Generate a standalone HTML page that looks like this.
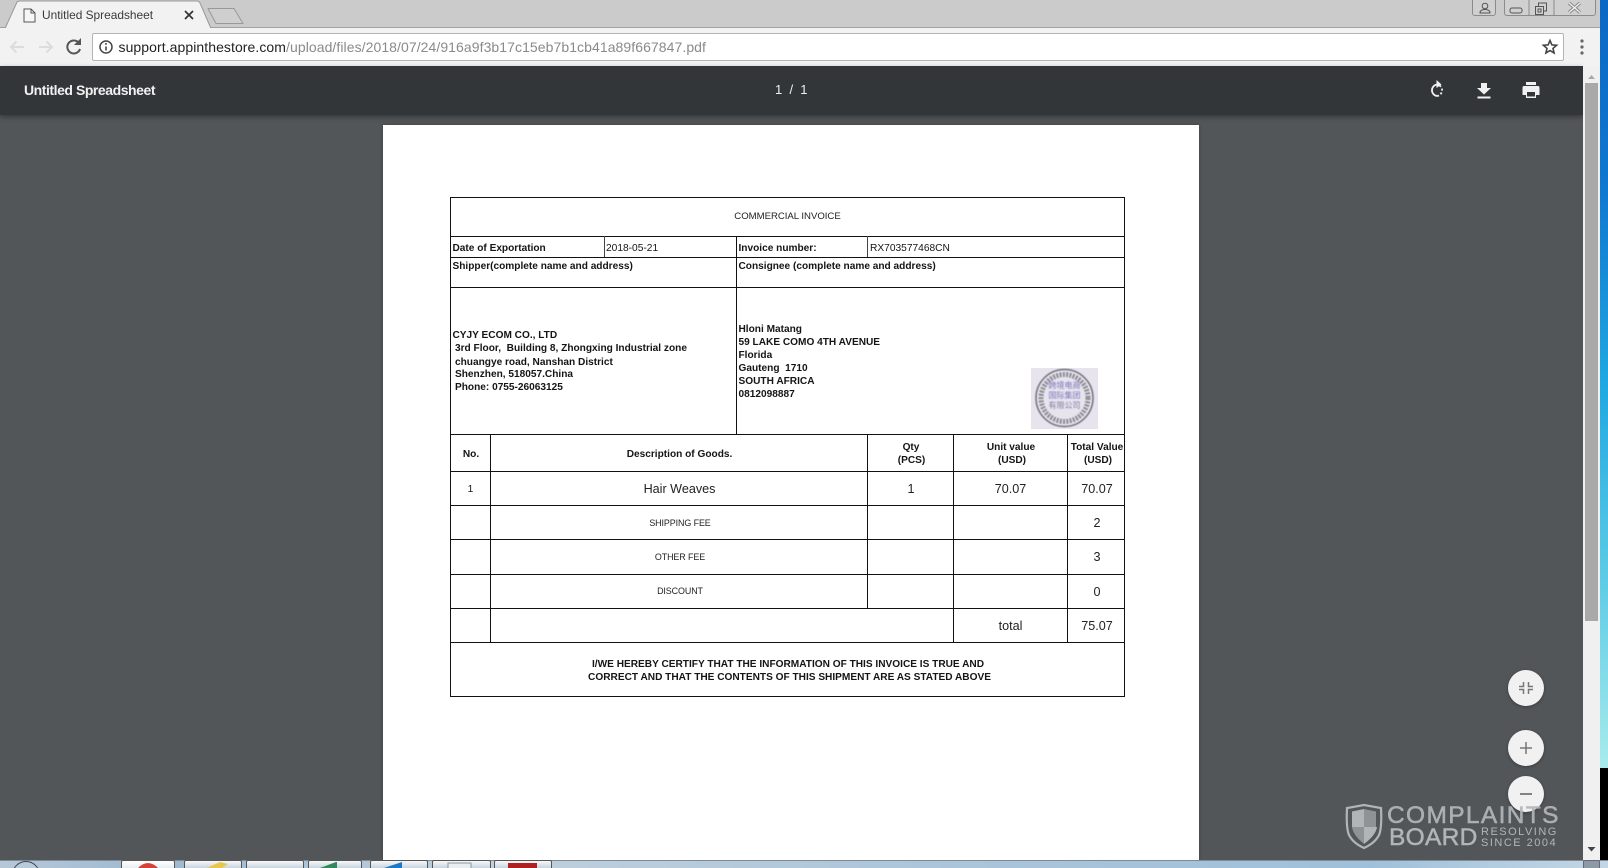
<!DOCTYPE html>
<html><head><meta charset="utf-8"><title>Untitled Spreadsheet</title>
<style>
html,body{margin:0;padding:0;width:1608px;height:868px;overflow:hidden;background:#000;font-family:"Liberation Sans",sans-serif}
div,svg{position:absolute}
span{position:static}
#root{left:0;top:0;width:1608px;height:868px;overflow:hidden;background:#000}
.t{white-space:nowrap;color:#151515;line-height:14px;height:14px}
.c{transform:translateX(-50%)}
.b{font-weight:bold;font-size:10.12px}
.r{font-size:10.2px}
.n{font-size:12.6px;color:#222}
.k{font-size:9.6px;letter-spacing:-.1px;transform:translateX(-50%) scaleX(.93);color:#222}
.h{background:#111;height:1.2px}
.v{background:#111;width:1.2px}
.tb{top:860px;height:8px;background:linear-gradient(#f8f8f8,#c8d4de);border:1px solid #555;border-bottom:0;box-sizing:border-box;border-radius:2px 2px 0 0}
</style></head><body>
<div id="root">

<div style="left:1600px;top:0;width:8px;height:768px;background:linear-gradient(#0b68c4 0,#0f78d0 25%,#1fa8e2 50%,#5ccbe6 75%,#a8ebec 100%)"></div>

<div style="left:0;top:0;width:1600px;height:28px;background:#cbcbcb;border-bottom:1px solid #a2a2a2;box-sizing:border-box"></div>
<svg style="left:0;top:0" width="260" height="30">
<path d="M5 28.5 L17 2 Q18 1 20 1 L197 1 Q199 1 200 3 L211 28.5" fill="#f2f2f2" stroke="#999"/>
<path d="M0 29H5M211 28.5H260" stroke="#a2a2a2"/>
<path d="M208 8.5H234L243 23.5H216Z" fill="#cfcfcf" stroke="#999" stroke-linejoin="round"/>
<path d="M24 9H31L35 13V22H24Z M31 9V13H35" fill="#f6f6f6" stroke="#555" stroke-width="1"/>
<path d="M185 11L193 19M193 11L185 19" stroke="#333" stroke-width="1.7"/>
</svg>
<div class="t" style="left:42px;top:8px;font-size:11.9px;color:#3a3a3a">Untitled Spreadsheet</div>

<div style="left:1472px;top:-1px;width:24px;height:17px;background:#d0d0d0;border:1px solid #8b8b8b;box-sizing:border-box;border-radius:0 0 3px 3px"></div>
<div style="left:1504px;top:-1px;width:92px;height:17px;background:#d0d0d0;border:1px solid #8b8b8b;box-sizing:border-box;border-radius:0 0 3px 3px"></div>
<svg style="left:1470px;top:0" width="130" height="18" fill="none" stroke="#555">
<circle cx="15" cy="6" r="2.8"/><path d="M10 13Q10 9.500 15 9.500Q20 9.500 20 13Z"/>
<path d="M59 0V16M84 0V16" stroke="#8b8b8b"/>
<rect x="40" y="8" width="12" height="5" rx="2"/>
<rect x="65.500" y="6.500" width="8" height="8"/><path d="M68.500 6.500V3H76.500V11H73.500"/><rect x="68" y="9" width="3" height="3"/>
<path d="M99 3L110 12.500M110 3L99 12.500" stroke-width="3.400" stroke="#888"/>
<path d="M99 3L110 12.500M110 3L99 12.500" stroke-width="1.400" stroke="#eee"/>
</svg>

<div style="left:0;top:28px;width:1600px;height:38px;background:#f2f2f2"></div>
<div style="left:92px;top:33px;width:1472px;height:28px;background:#fff;border:1px solid #b4b4b4;box-sizing:border-box;border-radius:2px"></div>
<svg style="left:0;top:28px" width="125" height="38" fill="none">
<path d="M24 19H11M16.500 13.500L11 19L16.500 24.500" stroke="#dcdcdc" stroke-width="2"/>
<path d="M39 19H52M46.500 13.500L52 19L46.500 24.500" stroke="#dcdcdc" stroke-width="2"/>
<path d="M79 15A6.500 6.500 0 1 0 80 21" stroke="#555" stroke-width="2"/>
<path d="M81 10V17H74Z" fill="#555"/>
<circle cx="106" cy="19" r="6" stroke="#444" stroke-width="1.500"/>
<path d="M106 18.500V22.500M106 15V16.800" stroke="#444" stroke-width="1.600"/>
</svg>
<div class="t" style="left:118.500px;top:40px;font-size:14px;letter-spacing:.07px;color:#222">support.appinthestore.com<span style="color:#8a8a8a">/upload/files/2018/07/24/916a9f3b17c15eb7b1cb41a89f667847.pdf</span></div>
<svg style="left:1540px;top:36px" width="50" height="24">
<path d="M10 4.500L11.900 8.900L16.600 9.300L13 12.400L14.100 17L10 14.600L5.900 17L7 12.400L3.400 9.300L8.100 8.900Z" fill="none" stroke="#444" stroke-width="1.600"/>
<circle cx="42" cy="5" r="1.600" fill="#666"/><circle cx="42" cy="11" r="1.600" fill="#666"/><circle cx="42" cy="17" r="1.600" fill="#666"/>
</svg>

<div style="left:0;top:66px;width:1583px;height:794px;background:#525659"></div>
<div style="left:0;top:66px;width:1583px;height:49px;background:#323639;box-shadow:0 2px 5px rgba(0,0,0,.35)"></div>
<div class="t" style="left:24px;top:83px;font-size:14px;font-weight:bold;letter-spacing:-.45px;color:#f1f1f1">Untitled Spreadsheet</div>
<div class="t" style="left:775px;top:83px;font-size:13px;color:#f1f1f1;letter-spacing:.3px;word-spacing:3px">1 / 1</div>
<svg style="left:1420px;top:76px" width="130" height="28">
<path d="M17 8.500A5.800 5.800 0 0 0 17 20" fill="none" stroke="#f1f1f1" stroke-width="1.800"/>
<path d="M17 20A5.800 5.800 0 0 0 17 8.500" fill="none" stroke="#f1f1f1" stroke-width="1.800" stroke-dasharray="2 2"/>
<path d="M16.500 4V12L21.500 8.500Z" fill="#f1f1f1"/>
<path d="M61 7H67V12H71L64 18.500L57 12H61Z M57.500 20.500H70.500V22.500H57.500Z" fill="#f1f1f1"/>
<path d="M106 6H116V9H106Z M104 10H118Q119.500 10 119.500 12V19H116V22H106V19H102.500V12Q102.500 10 104 10Z" fill="#f1f1f1"/>
<rect x="107" y="16" width="8" height="4.500" fill="#323639"/>
</svg>

<div style="left:1583px;top:66px;width:17px;height:794px;background:#f0f0f0"></div>
<div style="left:1585px;top:83px;width:13px;height:538px;background:#a9a9a9"></div>
<svg style="left:1585px;top:70px" width="13" height="790">
<path d="M3 9L6.500 5L10 9Z" fill="#aaa"/><path d="M2.500 777H10.500L6.500 781.500Z" fill="#444"/>
</svg>

<div style="left:382.500px;top:125px;width:816.500px;height:735px;background:#fff;box-shadow:0 0 4px rgba(0,0,0,.25)"></div>

<div class="h" style="left:450px;top:197px;width:674.500px"></div>
<div class="h" style="left:450px;top:236px;width:674.500px"></div>
<div class="h" style="left:450px;top:257px;width:674.500px"></div>
<div class="h" style="left:450px;top:287px;width:674.500px"></div>
<div class="h" style="left:450px;top:434px;width:674.500px"></div>
<div class="h" style="left:450px;top:471px;width:674.500px"></div>
<div class="h" style="left:450px;top:505px;width:674.500px"></div>
<div class="h" style="left:450px;top:539px;width:674.500px"></div>
<div class="h" style="left:450px;top:574px;width:674.500px"></div>
<div class="h" style="left:450px;top:608px;width:674.500px"></div>
<div class="h" style="left:450px;top:642px;width:674.500px"></div>
<div class="h" style="left:450px;top:696px;width:674.500px"></div>
<div class="v" style="left:450px;top:197px;height:500px"></div>
<div class="v" style="left:1124px;top:197px;height:500px"></div>
<div class="v" style="left:604px;top:236px;height:21px;background:#444"></div>
<div class="v" style="left:736px;top:236px;height:198px"></div>
<div class="v" style="left:867px;top:236px;height:21px;background:#444"></div>
<div class="v" style="left:490px;top:434px;height:208px"></div>
<div class="v" style="left:867px;top:434px;height:174px"></div>
<div class="v" style="left:953px;top:434px;height:208px"></div>
<div class="v" style="left:1067px;top:434px;height:208px"></div>

<div class="t k" style="left:787.500px;top:210px;transform:translateX(-50%);letter-spacing:-.02px">COMMERCIAL INVOICE</div>
<div class="t b" style="left:452.500px;top:241.500px">Date of Exportation</div>
<div class="t r" style="left:606px;top:241.500px">2018-05-21</div>
<div class="t b" style="left:738.500px;top:241.500px">Invoice number:</div>
<div class="t r" style="left:870px;top:241.500px">RX703577468CN</div>
<div class="t b" style="left:452.500px;top:259.500px">Shipper(complete name and address)</div>
<div class="t b" style="left:738.500px;top:259.500px">Consignee (complete name and address)</div>

<div class="t b" style="left:452.500px;top:328.500px">CYJY ECOM CO., LTD</div>
<div class="t b" style="left:455px;top:341.500px">3rd Floor,&nbsp; Building 8, Zhongxing Industrial zone</div>
<div class="t b" style="left:455px;top:355.500px">chuangye road, Nanshan District</div>
<div class="t b" style="left:455px;top:368px">Shenzhen, 518057.China</div>
<div class="t b" style="left:455px;top:380.500px">Phone: 0755-26063125</div>

<div class="t b" style="left:738.500px;top:322.800px">Hloni Matang</div>
<div class="t b" style="left:738.500px;top:335.800px">59 LAKE COMO 4TH AVENUE</div>
<div class="t b" style="left:738.500px;top:348.800px">Florida</div>
<div class="t b" style="left:738.500px;top:361.800px">Gauteng&nbsp; 1710</div>
<div class="t b" style="left:738.500px;top:374.800px">SOUTH AFRICA</div>
<div class="t b" style="left:738.500px;top:388.300px">0812098887</div>

<svg style="left:1031px;top:368px" width="67" height="61">
<defs><path id="ring" d="M33.500 53.500A23.500 23.500 0 1 1 33.600 53.500"/><filter id="bl"><feGaussianBlur stdDeviation=".45"/></filter></defs>
<rect width="67" height="61" fill="#e7e4ee"/>
<g filter="url(#bl)">
<circle cx="33.500" cy="30" r="28.500" fill="none" stroke="#6f6e78" stroke-width="1.500"/>
<circle cx="33.500" cy="30" r="23.500" fill="none" stroke="#8c8b94" stroke-width="5" stroke-dasharray="2 1.300"/>
<text x="33.500" y="20" text-anchor="middle" font-family="Noto Sans CJK SC,sans-serif" font-size="8" fill="#7a74b8">跨境电商</text>
<text x="33.500" y="30" text-anchor="middle" font-family="Noto Sans CJK SC,sans-serif" font-size="8" fill="#7a74b8">国际集团</text>
<text x="33.500" y="40" text-anchor="middle" font-family="Noto Sans CJK SC,sans-serif" font-size="8" fill="#7d7a9e">有限公司</text>
</g>
</svg>

<div class="t b c" style="left:471px;top:447.500px">No.</div>
<div class="t b c" style="left:679.500px;top:447.500px">Description of Goods.</div>
<div class="t b c" style="left:911px;top:441px">Qty</div>
<div class="t b c" style="left:911.500px;top:453.500px">(PCS)</div>
<div class="t b c" style="left:1011px;top:441px">Unit value</div>
<div class="t b c" style="left:1012px;top:453.500px">(USD)</div>
<div class="t b c" style="left:1097px;top:441px">Total Value</div>
<div class="t b c" style="left:1098px;top:453.500px">(USD)</div>

<div class="t r c" style="left:470.500px;top:482.500px">1</div>
<div class="t n c" style="left:679.500px;top:482px">Hair Weaves</div>
<div class="t n c" style="left:911px;top:482px">1</div>
<div class="t n c" style="left:1010.500px;top:482px">70.07</div>
<div class="t n c" style="left:1097px;top:482px">70.07</div>
<div class="t k" style="left:679.500px;top:517px">SHIPPING FEE</div>
<div class="t n c" style="left:1097px;top:515.500px">2</div>
<div class="t k" style="left:679.500px;top:551px">OTHER FEE</div>
<div class="t n c" style="left:1097px;top:550px">3</div>
<div class="t k" style="left:679.500px;top:585px">DISCOUNT</div>
<div class="t n c" style="left:1097px;top:584.500px">0</div>
<div class="t n c" style="left:1010.500px;top:619px">total</div>
<div class="t n c" style="left:1097px;top:619px">75.07</div>
<div class="t b c" style="left:788px;top:657.500px">I/WE HEREBY CERTIFY THAT THE INFORMATION OF THIS INVOICE IS TRUE AND</div>
<div class="t b c" style="left:789.500px;top:670.500px">CORRECT AND THAT THE CONTENTS OF THIS SHIPMENT ARE AS STATED ABOVE</div>

<div style="left:1508px;top:670px;width:36px;height:36px;border-radius:50%;background:#f1f1f1;box-shadow:0 1px 3px rgba(0,0,0,.3)"></div>
<div style="left:1508px;top:730px;width:36px;height:36px;border-radius:50%;background:#f1f1f1;box-shadow:0 1px 3px rgba(0,0,0,.3)"></div>
<div style="left:1508px;top:776px;width:36px;height:36px;border-radius:50%;background:#f1f1f1;box-shadow:0 1px 3px rgba(0,0,0,.3)"></div>
<svg style="left:1508px;top:670px" width="36" height="142" fill="none" stroke="#777" stroke-width="1.500">
<path d="M15.500 12V16.500H11M20.500 12V16.500H25M15.500 24V19.500H11M20.500 24V19.500H25"/>
<path d="M18 72V84M12 78H24"/>
<path d="M12 124H24" stroke-width="1.800"/>
</svg>

<svg style="left:1345px;top:802px" width="40" height="48">
<path d="M19 3L36 6Q37 26 34 33Q30 41 19 46Q8 41 4 33Q1 26 2 6Z" fill="none" stroke="#b2b5b7" stroke-width="2.200"/>
<path d="M19 7L7 9.500V25H19Z M19 25H32Q31 33 19 42Z" fill="#b2b5b7" />
<path d="M19 7L31 9.500V25H19Z M19 25H7Q8 33 19 42Z" fill="#8f9396"/>
</svg>
<div class="t" style="left:1387px;top:804px;height:24px;line-height:24px;font-size:24.500px;letter-spacing:1.350px;color:rgba(178,181,183,.92);-webkit-text-stroke:.5px rgba(178,181,183,.92)">COMPLAINTS</div>
<div class="t" style="left:1389px;top:826px;height:24px;line-height:24px;font-size:24.500px;letter-spacing:.3px;color:#b2b5b7;-webkit-text-stroke:.5px #b2b5b7">BOARD</div>
<div class="t" style="left:1481px;top:825px;font-size:11px;letter-spacing:1.500px;color:#b2b5b7">RESOLVING</div>
<div class="t" style="left:1481px;top:836px;font-size:11px;letter-spacing:1.500px;color:#b2b5b7">SINCE 2004</div>

<div style="left:0;top:860px;width:1608px;height:8px;background:linear-gradient(90deg,#b6c8d8 0,#9db8d0 10%,#c0d0dc 30%,#aac4da 60%,#9fc0da 85%,#c2d6e4 100%);border-top:1px solid #7e8a94;box-sizing:border-box"></div>
<div style="left:12px;top:861px;width:28px;height:28px;border-radius:50%;border:1px solid #445;box-sizing:border-box;background:#b8cbdb"></div>
<div class="tb" style="left:121px;width:54px;background:linear-gradient(#fff,#e8eef2)"></div>
<div class="tb" style="left:184px;width:58px"></div>
<div class="tb" style="left:246px;width:58px"></div>
<div class="tb" style="left:308px;width:54px"></div>
<div class="tb" style="left:370px;width:58px"></div>
<div class="tb" style="left:432px;width:59px"></div>
<div class="tb" style="left:494px;width:58px"></div>
<div class="tb" style="left:1583px;width:17px;background:#8c9aa6;border-color:#667"></div>
<svg style="left:0;top:860px" width="560" height="8">
<path d="M138 8Q148 -2 158 8Z" fill="#d8403a"/>
<path d="M207 8L220 2L228 4L222 8Z" fill="#e8c84a"/>
<path d="M320 8L336 2H337V8Z" fill="#2e8a58"/>
<path d="M384 8L402 2V8Z" fill="#1a78c8"/>
<rect x="448" y="3" width="23" height="6" fill="#e8eef2" stroke="#8899a6"/>
<rect x="508" y="3" width="29" height="6" fill="#b02020"/>
</svg>
</div>
</body></html>
